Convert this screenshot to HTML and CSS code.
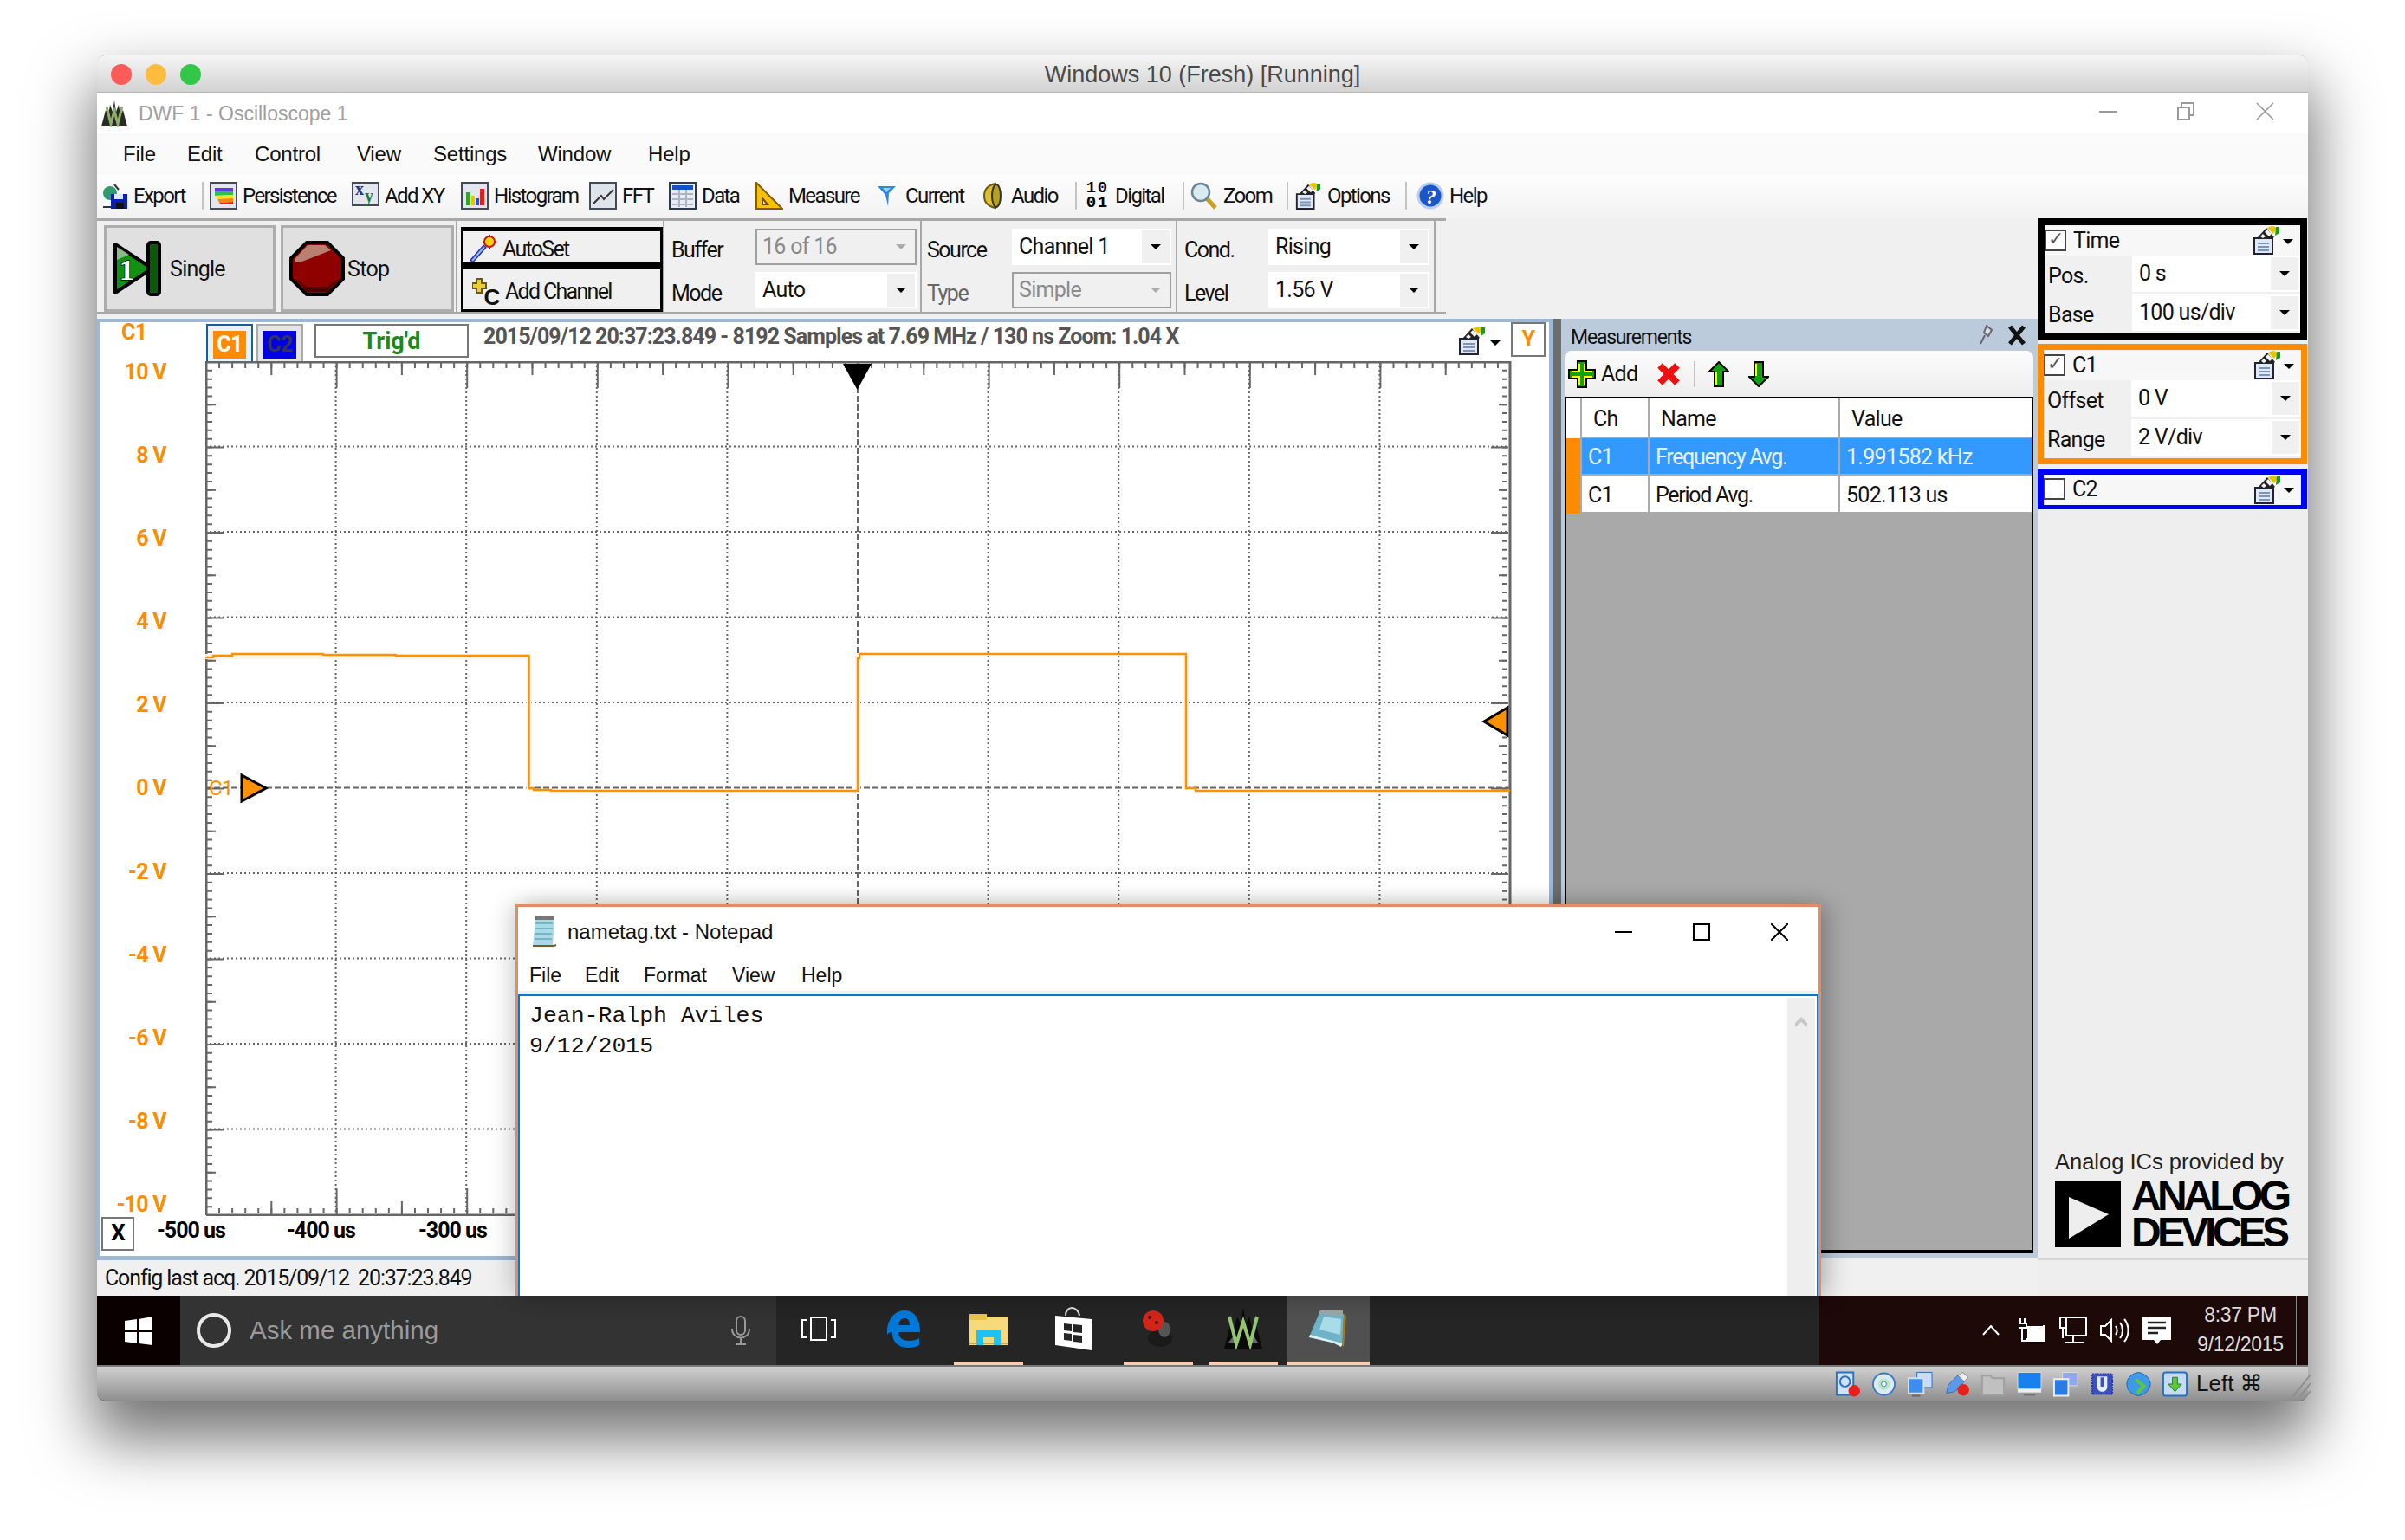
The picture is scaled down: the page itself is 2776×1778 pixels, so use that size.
FILE: index.html
```html
<!DOCTYPE html>
<html>
<head>
	<meta charset="utf-8">
	<title>Windows 10 (Fresh) [Running]</title>
	<link rel="stylesheet" href="styles.css">
</head>
<body>
<svg class="defs">
	<symbol id="opt" viewBox="0 0 32 34">
		<path d="M2 15h21v18H2z" fill="#dfe8f5" stroke="#223" stroke-width="2"/>
		<path d="M6 21h13M6 25h13M6 29h13" stroke="#7f93b5" stroke-width="2"/>
		<path d="M5 15 16 3l9 11-2 1z" fill="#222"/>
		<path d="M9 13l3-3 3 3-3 2zM14 8l3-3 3 3-3 3zM19 13l-2-2 3-3 2 2z" fill="#f2f2f2"/>
		<path d="M17 3c5-3 10-2 11 1l-4 6z" fill="#e8c400"/>
		<path d="M27 2h4v7l-5 3z" fill="#1a9a1a"/>
	</symbol>
</svg>

<div class="mac">
	<div class="mac-title">
		<div class="lights"><i class="red"></i><i class="amber"></i><i class="green"></i></div>
		Windows 10 (Fresh) [Running]
	</div>

	<div class="screen">
		<div class="dwf-title">
			<svg class="dwf-logo" viewBox="0 0 32 32"><path d="M1 31 6 12l3 6 2-12 3 8 2-13 2 13 3-8 2 12 3-6 5 19z" fill="#2b2b26"/><path d="M7 8l5 20 4-15 4 15 5-20" fill="none" stroke="#8fae6d" stroke-width="3"/></svg>
			<span class="dwf-name">DWF 1 - Oscilloscope 1</span>
			<div class="win-btns">
				<i class="min"></i>
				<svg width="21" height="21" viewBox="0 0 21 21"><path d="M1 6h13v14H1zM5 5V1h14v14h-4" fill="none" stroke="#999" stroke-width="2"/></svg>
				<svg width="21" height="21" viewBox="0 0 21 21"><path d="M1 1l19 19M20 1 1 20" stroke="#999" stroke-width="1.6"/></svg>
			</div>
		</div>

		<div class="menu">
			<span>File</span><span>Edit</span><span>Control</span><span>View</span><span>Settings</span><span>Window</span><span>Help</span>
		</div>

		<div class="toolbar">
			<div class="tool"><svg viewBox="0 0 32 32"><circle cx="11" cy="13" r="8" fill="#2f9a6a"/><path d="M3 29h14M16 3l5 6" stroke="#333" stroke-width="2"/><path d="M12 14h19v17H12z" fill="#0b1fae"/><path d="M16 14h10v6H16z" fill="#dfe6f2"/><path d="M18 24h9v7h-9z" fill="#111"/></svg>Export</div>
			<i class="sep"></i>
			<div class="tool"><svg viewBox="0 0 32 32"><path d="M1 1h30v30H1z" fill="#e3e6ee" stroke="#444b57" stroke-width="2"/><path d="M6 7h21v4H6z" fill="#5a3fe0"/><path d="M6 11l21 0v4l-21 1z" fill="#2fbf4a"/><path d="M7 16l20-1v4L9 20z" fill="#f6e21c"/><path d="M9 20l18-1v4l-16 1z" fill="#f7871c"/><path d="M11 24l16-1v3H13z" fill="#e8281c"/></svg>Persistence</div>
			<div class="tool"><svg viewBox="0 0 32 32"><path d="M1 1h30v26H1z" fill="#e3e6ee" stroke="#444b57" stroke-width="2"/><text x="4" y="15" class="svg-xy xy-x">x</text><text x="15" y="23" class="svg-xy xy-y">y</text></svg>Add XY</div>
			<div class="tool"><svg viewBox="0 0 32 32"><path d="M1 1h30v30H1z" fill="#e3e6ee" stroke="#444b57" stroke-width="2"/><path d="M6 12h5v15H6z" fill="#2fa52f"/><path d="M12 16h4v11h-4z" fill="#e8c400"/><path d="M17 19h4v8h-4z" fill="#2050d0"/><path d="M22 8h5v19h-5z" fill="#e02020"/></svg>Histogram</div>
			<div class="tool"><svg viewBox="0 0 32 32"><path d="M1 1h30v30H1z" fill="#dfe3ea" stroke="#444b57" stroke-width="2"/><path d="M5 25l9-9 3 4 11-11" fill="none" stroke="#333" stroke-width="2"/></svg>FFT</div>
			<div class="tool"><svg viewBox="0 0 32 32"><path d="M1 1h30v30H1z" fill="#e8ecf4" stroke="#2d3a48" stroke-width="2"/><path d="M4 4h24v5H4z" fill="#1450c8"/><path d="M4 14h24M4 20h24M4 26h24M12 9v20M20 9v20" stroke="#a9b4c4" stroke-width="2"/></svg>Data</div>
			<div class="tool"><svg viewBox="0 0 32 32"><path d="M1 1l30 30H1z" fill="#f4c20d" stroke="#8a5a00" stroke-width="2"/><path d="M8 19l6 7H8z" fill="#f6f0dc" stroke="#7a4a00" stroke-width="2"/></svg>Measure</div>
			<div class="tool tool-gap"><svg class="narrow-icon" viewBox="0 0 21 24"><path d="M0 1h21l-8 8-1 15-3-13z" fill="#2a8ae0"/><path d="M6 3h9l-5 5z" fill="#9ad0f5"/></svg>Current</div>
			<div class="tool tool-gap"><svg class="narrow-icon" viewBox="0 0 21 30"><path d="M14 1C4 3 1 9 1 15s3 12 13 14z" fill="#dcbf2a" stroke="#6a5a10" stroke-width="2"/><ellipse cx="15" cy="15" rx="5" ry="13" fill="#b8a020" stroke="#333" stroke-width="2"/></svg>Audio</div>
			<i class="sep"></i>
			<div class="tool"><div class="bits"><b>1</b><b>0</b><b>0</b><b>1</b></div>Digital</div>
			<i class="sep"></i>
			<div class="tool"><svg viewBox="0 0 32 32"><path d="M18 18l11 12" stroke="#c8a020" stroke-width="5"/><circle cx="12" cy="12" r="10" fill="#d8eaf2" stroke="#6b8795" stroke-width="2.5"/></svg>Zoom</div>
			<i class="sep"></i>
			<div class="tool"><svg><use href="#opt"/></svg>Options</div>
			<i class="sep"></i>
			<div class="tool"><svg viewBox="0 0 32 32"><circle cx="16" cy="16" r="14" fill="#1b56c8" stroke="#b9cdf0" stroke-width="3"/><text x="16" y="25" text-anchor="middle" class="svg-help">?</text></svg>Help</div>
		</div>

		<div class="body">
			<div class="left">
				<div class="strip">
					<div class="run-btn">
						<svg width="56" height="64" viewBox="0 0 56 64"><path d="M3 4l38 25v6L3 60z" fill="#129012" stroke="#000" stroke-width="4" stroke-linejoin="round"/><path d="M5 7l14 9-14 6z" fill="#8cb88c"/><rect x="41" y="2" width="13" height="60" rx="3" fill="#0a5a0a" stroke="#000" stroke-width="4"/><text x="16" y="45" text-anchor="middle" class="svg-one">1</text></svg>
						<span>Single</span>
					</div>
					<div class="run-btn stop">
						<svg width="64" height="64" viewBox="0 0 64 64"><path d="M20 2h24l18 18v24L44 62H20L2 44V20z" fill="#8f0000" stroke="#000" stroke-width="4"/><path d="M21 5h20l7 6-36 14H6V21z" fill="#b97f70"/><path d="M6 43l15 16h22l15-16-14 10H20z" fill="#4d0000"/></svg>
						<span>Stop</span>
					</div>
					<i class="vbar"></i>
					<div class="auto-col">
						<div class="auto-btn first"><svg width="32" height="32" viewBox="0 0 32 32"><path d="M2 31 18 13" stroke="#1c2fb0" stroke-width="5"/><path d="M3 30 17 14" stroke="#9db4ef" stroke-width="2"/><circle cx="23" cy="8" r="6" fill="#f7d40a" stroke="#d01010" stroke-width="2"/><path d="M23 0v3M31 8h-3M18 8h-3M23 13v3" stroke="#d01010" stroke-width="2"/></svg>AutoSet</div>
						<div class="auto-btn"><svg width="32" height="32" viewBox="0 0 32 32"><path d="M5 1h6v5h5v6h-5v5H5v-5H0V6h5z" fill="#e8d030" stroke="#6a5a10" stroke-width="2"/><text x="22" y="31" text-anchor="middle" class="svg-c">C</text></svg>Add Channel</div>
					</div>
					<i class="vbar"></i>
					<div class="form-group g1">
						<label>Buffer</label><div class="combo off"><span>16 of 16</span><b></b></div>
						<label>Mode</label><div class="combo"><span>Auto</span><b></b></div>
					</div>
					<i class="vbar"></i>
					<div class="form-group g2">
						<label>Source</label><div class="combo"><span>Channel 1</span><b></b></div>
						<label class="faded">Type</label><div class="combo off"><span>Simple</span><b></b></div>
					</div>
					<i class="vbar"></i>
					<div class="form-group g3">
						<label>Cond.</label><div class="combo"><span>Rising</span><b></b></div>
						<label>Level</label><div class="combo"><span>1.56 V</span><b></b></div>
					</div>
					<i class="vbar"></i>
					<i class="strip-end"></i>
				</div>

				<div class="work">
					<div class="scope">
						<div class="scope-head">
							<span class="c1-tag">C1</span>
							<div class="tab on"><span class="orange-chip">C1</span></div>
							<div class="tab"><span class="blue-chip">C2</span></div>
							<div class="trig">Trig'd</div>
							<div class="acq">2015/09/12 20:37:23.849 - 8192 Samples at 7.69 MHz / 130 ns Zoom: 1.04 X</div>
							<svg class="scope-opt"><use href="#opt"/></svg>
							<i class="drop"></i>
							<div class="y-btn">Y</div>
						</div>
						<div class="scope-mid">
							<div class="y-labels">
								<span>10 V</span><span>8 V</span><span>6 V</span><span>4 V</span><span>2 V</span><span>0 V</span><span>-2 V</span><span>-4 V</span><span>-6 V</span><span>-8 V</span><span>-10 V</span>
							</div>
							<svg class="plot" width="1510" height="987" viewBox="0 0 1510 987">
								<g class="grid-dot">
									<path d="M0 98.5H1506M0 197H1506M0 295.5H1506M0 394H1506M0 591H1506M0 689.5H1506M0 788H1506M0 886.5H1506"/>
									<path d="M150.6 0V986M301.2 0V986M451.8 0V986M602.4 0V986M903.6 0V986M1054.2 0V986M1204.8 0V986M1355.4 0V986"/>
								</g>
								<path class="grid-dash" d="M0 492.5H1506M753 0V986"/>
								<path class="axis" d="M1 986V1H1506V986H1"/>
								<path class="tick minor-x" d="M0 5H1506M0 981H1506"/>
								<path class="tick half-x" d="M0 8.5H1506M0 977.5H1506"/>
								<path class="tick major-x" d="M0 16H1506M0 970H1506"/>
								<path class="tick minor-y" d="M5 0V986M1500 0V986"/>
								<path class="tick half-y" d="M7 0V986M1498 0V986"/>
								<path class="tick major-y" d="M12 0V986M1494 0V986"/>
								<path class="halo" d="M0 341H373.5V495M753 495V340M1132 338V495"/>
								<path class="trace" d="M0 342H9V340H31V338H136V339H220V340H373.5V493H379V495H399V496H753V343H755V338H1132V493H1143V496H1506"/>
								<text x="4" y="501" class="c1-mark">C1</text>
								<path class="marker" d="M42 478 70 493 42 508z"/>
								<path class="marker" d="M1503 400 1476 416 1503 432z"/>
								<path d="M736 3H769L752.5 33z" fill="#000"/>
							</svg>
						</div>
						<div class="scope-foot">
							<div class="x-btn">X</div>
							<span>-500 us</span><span>-400 us</span><span>-300 us</span>
						</div>
					</div>
					<i class="splitter"></i>
					<div class="meas">
						<div class="meas-head">
							<span>Measurements</span>
							<svg width="16" height="24" viewBox="0 0 16 24"><path d="M9 1l6 5-4 7-5-4zM7 12 2 22" fill="#ddd" stroke="#667" stroke-width="2"/></svg>
							<svg width="22" height="24" viewBox="0 0 22 24"><path d="M3 2l16 20M19 2 3 22" stroke="#111" stroke-width="5"/></svg>
						</div>
						<div class="meas-tools">
							<svg width="32" height="32" viewBox="0 0 32 32"><path d="M11 1h10v10h10v10H21v10H11V21H1V11h10z" fill="#10a010" stroke="#000" stroke-width="2"/><path d="M13 4v9H4M19 4v9h9M13 28v-9H4M19 28v-9h9" fill="none" stroke="#ff0" stroke-width="2"/></svg>
							<span class="add-word">Add</span>
							<svg class="del" width="28" height="28" viewBox="0 0 28 28"><path d="M4 4l20 20M24 4 4 24" stroke="#ee1010" stroke-width="8"/></svg>
							<i class="sep short"></i>
							<svg class="up" width="24" height="30" viewBox="0 0 24 30"><path d="M12 1 23 12h-6v17H7V12H1z" fill="#10a010" stroke="#000" stroke-width="2"/><path d="M9 13v14" stroke="#ff0" stroke-width="2"/></svg>
							<svg class="dn" width="24" height="30" viewBox="0 0 24 30"><path d="M12 29 23 18h-6V1H7v17H1z" fill="#10a010" stroke="#000" stroke-width="2"/><path d="M9 17V3" stroke="#ff0" stroke-width="2"/></svg>
						</div>
						<div class="meas-table">
							<div class="m-row m-top"><i></i><span>Ch</span><span>Name</span><span>Value</span></div>
							<div class="m-row sel"><i></i><span>C1</span><span class="m-name">Frequency Avg.</span><span>1.991582 kHz</span></div>
							<div class="m-row"><i></i><span>C1</span><span class="m-name">Period Avg.</span><span>502.113 us</span></div>
						</div>
					</div>
				</div>
				<div class="status">Config last acq. 2015/09/12&nbsp; 20:37:23.849</div>
			</div>

			<div class="side">
				<div class="chan c-time">
					<div class="chan-top"><i class="check on"></i><span>Time</span><svg class="chan-opt"><use href="#opt"/></svg><i class="drop"></i></div>
					<div class="chan-row"><label>Pos.</label><div class="combo"><span>0 s</span><b></b></div></div>
					<div class="chan-row"><label>Base</label><div class="combo"><span>100 us/div</span><b></b></div></div>
				</div>
				<div class="chan c-one">
					<div class="chan-top"><i class="check on"></i><span>C1</span><svg class="chan-opt"><use href="#opt"/></svg><i class="drop"></i></div>
					<div class="chan-row"><label>Offset</label><div class="combo"><span>0 V</span><b></b></div></div>
					<div class="chan-row"><label>Range</label><div class="combo"><span>2 V/div</span><b></b></div></div>
				</div>
				<div class="chan c-two">
					<div class="chan-top"><i class="check"></i><span>C2</span><svg class="chan-opt"><use href="#opt"/></svg><i class="drop"></i></div>
				</div>
				<div class="adi">
					<div class="adi-by">Analog ICs provided by</div>
					<div class="adi-logo">
						<svg width="76" height="76" viewBox="0 0 76 76"><path d="M0 0h76v76H0z" fill="#000"/><path d="M16 18 62 38 16 66z" fill="#eee"/></svg>
						<div class="adi-word">ANALOG<br>DEVICES</div>
					</div>
				</div>
			</div>
		</div>

		<div class="taskbar">
			<div class="start"><svg width="34" height="33" viewBox="0 0 34 33"><path d="M1 5l14-2v13H1zM17 3l16-3v16H17zM1 18h14v13L1 29zM17 18h16v15l-16-2z" fill="#fff"/></svg></div>
			<div class="search">
				<i class="cortana"></i>
				<span>Ask me anything</span>
				<svg width="24" height="34" viewBox="0 0 24 34"><rect x="7" y="1" width="10" height="21" rx="5" fill="none" stroke="#999" stroke-width="2"/><path d="M2 15c0 14 20 14 20 0M12 26v7M6 33h12" fill="none" stroke="#999" stroke-width="2"/></svg>
			</div>
			<div class="task"><svg width="40" height="28" viewBox="0 0 40 28"><path d="M11 1h18v26H11zM6 4H1v20h5M34 4h5v20h-5" fill="none" stroke="#fff" stroke-width="2"/></svg></div>
			<div class="task"><svg width="40" height="44" viewBox="0 0 40 44"><path fill-rule="evenodd" d="M1 22C3 8 12 1 21 1c11 0 18 9 18 25H14c0 7 6 10 13 10 4 0 8-1 11-3v8c-3 2-7 3-13 3C13 44 6 36 7 26c-2 0-4 0-6 3zM14 18h13c0-5-2-8-6-8-4 0-6 3-7 8z" fill="#0078d7"/></svg></div>
			<div class="task running"><svg width="44" height="38" viewBox="0 0 44 38"><path d="M0 2h16l2 3h26v33H0z" fill="#f6d978"/><path d="M0 2h20v7H0z" fill="#e8c44a"/><path d="M0 36h44" stroke="#bfa860" stroke-width="2"/><path d="M8 38V21h28v17h-8V29H16v9z" fill="#1fc0f2"/></svg></div>
			<div class="task"><svg width="42" height="50" viewBox="0 0 42 50"><path d="M12 10C12-2 26-2 28 10" fill="none" stroke="#ddd" stroke-width="2"/><path d="M0 10l42 4v36L0 44z" fill="#fff"/><path d="M10 19l9 1v8l-9-1zM21 20l10 1v9l-10-1zM10 30l9 1v8l-9-1zM21 32l10 1v8l-10-1z" fill="#252525"/></svg></div>
			<div class="task running"><svg width="44" height="42" viewBox="0 0 44 42"><ellipse cx="24" cy="32" rx="14" ry="10" fill="#1a1a1a"/><ellipse cx="29" cy="22" rx="7" ry="9" fill="#555"/><ellipse cx="16" cy="12" rx="12" ry="12" fill="#d0261a"/><circle cx="12" cy="8" r="2" fill="#4a0a05"/><circle cx="20" cy="14" r="2" fill="#4a0a05"/></svg></div>
			<div class="task running"><svg width="46" height="48" viewBox="0 0 46 48"><path d="M1 47 8 20l4 6 4-16 4 8 3-18 3 18 4-8 4 16 4-6 7 27z" fill="#0a0a0a"/><path d="M6 40l6-8 5 8zM29 40l6-8 5 8z" fill="#666"/><path d="M7 10l8 32 8-26 8 26 8-32" fill="none" stroke="#93c572" stroke-width="4"/></svg></div>
			<div class="task running active"><svg width="46" height="44" viewBox="0 0 46 44"><path d="M14 1l27 4-1 36-39-9z" fill="#6fb3c8"/><path d="M14 1h26v6L12 5z" fill="#9aa8a8"/><path d="M18 8l20 3-1 18-24-6z" fill="#a9dbe8"/><path d="M1 32l27 6 10 5 2-4-38-10z" fill="#dff0f2"/><path d="M41 5l3 2-3 36-2-2z" fill="#a07a20"/></svg></div>
			<div class="bar-fill"></div>
			<div class="tray">
				<svg class="chev" width="20" height="12" viewBox="0 0 20 12"><path d="M1 11 10 1l9 10" fill="none" stroke="#fff" stroke-width="2"/></svg>
				<svg width="32" height="30" viewBox="0 0 32 30"><path d="M8 9h22v19H8z" fill="#fff"/><path d="M8 9h20v15H8z" fill="#111"/><path d="M10 10h18v14H10z" fill="#fff"/><path d="M2 1v6M7 1v6M0 7h9v5H0zM4 12v15h4" fill="none" stroke="#fff" stroke-width="2"/></svg>
				<svg width="32" height="32" viewBox="0 0 32 32"><path d="M8 1h23v21H8zM1 1h6v12H1zM4 13v12M16 22v7M7 30h21" fill="none" stroke="#fff" stroke-width="2"/></svg>
				<svg width="34" height="28" viewBox="0 0 34 28"><path d="M1 9h5l7-7v24l-7-7H1zM18 9c2 3 2 7 0 10M23 5c4 5 4 13 0 18M28 1c6 7 6 19 0 26" fill="none" stroke="#fff" stroke-width="2"/></svg>
				<svg width="33" height="32" viewBox="0 0 33 32"><path d="M0 0h33v27H21l-4 5-4-5H0z" fill="#fff"/><path d="M6 7h21M6 13h21M6 19h12" stroke="#222" stroke-width="2.5"/></svg>
				<div class="clock"><span>8:37 PM</span><span>9/12/2015</span></div>
				<i class="peek"></i>
			</div>
		</div>

		<div class="notepad">
			<div class="np-title">
				<svg width="30" height="36" viewBox="0 0 30 36"><path d="M4 2h22l-2 32H1z" fill="#a8dbe6"/><path d="M4 8h20M4 14h20M3 20h20M3 26h20" stroke="#74b5c8" stroke-width="2"/><path d="M4 0h22v4H4z" fill="#777"/><path d="M1 34h24l3-1" stroke="#7a5a20" stroke-width="2"/></svg>
				<span>nametag.txt - Notepad</span>
				<div class="np-btns">
					<i class="np-min"></i>
					<i class="np-max"></i>
					<svg width="20" height="20" viewBox="0 0 20 20"><path d="M0 0l20 20M20 0 0 20" stroke="#000" stroke-width="2"/></svg>
				</div>
			</div>
			<div class="np-menu"><span>File</span><span>Edit</span><span>Format</span><span>View</span><span>Help</span></div>
			<div class="np-edit">
				<div class="np-text">Jean-Ralph Aviles<br>9/12/2015</div>
				<div class="np-scroll"><svg width="14" height="12" viewBox="0 0 14 12"><path d="M7 0l7 7v5L7 6l-7 6V7z" fill="#c8c8c8"/></svg></div>
			</div>
		</div>
	</div>

	<div class="vbox">
		<svg viewBox="0 0 30 30"><path d="M2 1h20v27H2z" fill="#cfe2f7" stroke="#2a6fc0" stroke-width="2"/><circle cx="12" cy="12" r="6" fill="none" stroke="#2a6fc0" stroke-width="2"/><circle cx="23" cy="23" r="7" fill="#e8201c"/></svg>
		<svg viewBox="0 0 30 30"><circle cx="15" cy="15" r="13" fill="#dfeaf8" stroke="#3a78c8" stroke-width="2"/><circle cx="15" cy="15" r="7" fill="#b9e6c4"/><circle cx="15" cy="15" r="3" fill="#fff" stroke="#3a78c8"/></svg>
		<svg viewBox="0 0 30 30"><path d="M11 1h18v18H11z" fill="#c8dcf5" stroke="#2a6fc0"/><path d="M1 8h18v18H1z" fill="#3d8fef" stroke="#ddd" stroke-width="2"/><path d="M5 29h10" stroke="#666" stroke-width="2"/></svg>
		<svg viewBox="0 0 30 30"><path d="M3 26l2-10 12-12 8 7-12 13z" fill="#5a9ae8" stroke="#2a6fc0"/><path d="M17 5l5-4 7 6-5 5z" fill="#eee" stroke="#888"/><circle cx="23" cy="22" r="7" fill="#e8201c"/></svg>
		<svg viewBox="0 0 30 30"><path d="M2 5h10l2 3h14v20H2z" fill="#c0c0c0" stroke="#a0a0a0" stroke-width="2"/></svg>
		<svg viewBox="0 0 30 30"><path d="M1 1h28v20H1z" fill="#1a80ee" stroke="#ddd"/><path d="M1 21h28v4H1z" fill="#eee"/><path d="M8 28h14" stroke="#777" stroke-width="2"/></svg>
		<svg viewBox="0 0 30 30"><path d="M11 1h18v16H11z" fill="#8fa8f0" stroke="#ddd"/><path d="M1 9h17v20H1z" fill="#2a7ae8" stroke="#eee" stroke-width="2"/></svg>
		<svg viewBox="0 0 30 30"><path d="M3 3h24v24H3z" fill="#3a50c0" stroke="#2a3aa0" stroke-width="2" stroke-dasharray="2 1"/><path d="M9 6h12v12c0 8-12 8-12 0z" fill="#e8eef8"/><path d="M13 7h4v11h-4z" fill="#3a50c0"/></svg>
		<svg viewBox="0 0 30 30"><path d="M15 1C4 3 1 10 1 15s3 12 14 14c10-2 14-9 14-14S25 3 15 1z" fill="#3d9ae8" stroke="#1a60b0"/><path d="M13 8l11 9-9 11-3-4 6-7-8-6z" fill="#5ac83a"/></svg>
		<svg viewBox="0 0 30 30"><rect x="1" y="1" width="28" height="28" rx="3" fill="#c4daf5" stroke="#2a6fc0" stroke-width="2"/><path d="M12 7h6v8h5l-8 9-8-9h5z" fill="#5ac83a" stroke="#2a7a20"/></svg>
		<span class="host-key">Left ⌘</span>
		<svg class="grip" width="22" height="30" viewBox="0 0 22 30"><path d="M1 29 21 4M9 29 21 14M16 29l5-6" stroke="#8a8a8a" stroke-width="1.6"/></svg>
	</div>
</div>
</body>
</html>
```

FILE: styles.css
```css
html {
	height:1778px;
	overflow:hidden;
	background-color:#fff;
}
body {
	margin:0;
	height:1778px;
	font-family:Roboto,"Liberation Sans",sans-serif;
	font-size:25px;
	letter-spacing:-.7px;
	color:#111;
}
i {
	display:block;
	font-style:normal;
}
.defs {
	display:block;
	width:0;
	height:0;
}

/* mac window */
.mac {
	display:flex;
	flex-direction:column;
	width:2552px;
	height:1555px;
	margin:63px 0 0 112px;
	border-radius:10px;
	box-shadow:0 38px 70px 6px rgba(0,0,0,.55);
}
.mac-title {
	position:relative;
	box-sizing:border-box;
	height:44px;
	border-radius:10px 10px 0 0;
	border-top:1px solid #cfcfcf;
	border-bottom:1px solid #b4b4b4;
	background:linear-gradient(#f5f5f5,#d2d2d2);
	font-family:"Liberation Sans",sans-serif;
	font-size:27px;
	letter-spacing:0;
	line-height:44px;
	text-align:center;
	color:#4a4a4a;
}
.lights {
	position:absolute;
	left:16px;
	top:10px;
	display:flex;
	gap:16px;
}
.lights i {
	width:24px;
	height:24px;
	border-radius:50%;
}
.red { background-color:#fc5b57; }
.amber { background-color:#fdbc40; }
.green { background-color:#33c748; }

.screen {
	position:relative;
	display:flex;
	flex-direction:column;
	height:1469px;
	background-color:#f0f0f0;
}

/* dwf title and menu */
.dwf-title {
	display:flex;
	align-items:center;
	flex:none;
	height:47px;
	background-color:#fff;
}
.dwf-logo {
	width:32px;
	height:32px;
	margin-left:4px;
}
.dwf-name {
	margin:2px 0 0 12px;
	font-family:"Liberation Sans",sans-serif;
	font-size:23px;
	letter-spacing:0;
	color:#a0a0a0;
}
.win-btns {
	display:flex;
	align-items:center;
	gap:70px;
	margin-left:auto;
	margin-right:39px;
	padding-bottom:4px;
}
.win-btns .min {
	width:20px;
	height:2px;
	background-color:#999;
}
.menu {
	display:grid;
	grid-template-columns:74px 78px 118px 88px 121px 127px 60px;
	flex:none;
	box-sizing:border-box;
	height:48px;
	padding-left:30px;
	background-color:#fafafa;
	font-family:"Liberation Sans",sans-serif;
	font-size:24px;
	letter-spacing:-.2px;
	line-height:48px;
}
.toolbar {
	display:grid;
	grid-template-columns:117px 9px 164px 126px 148px 92px 100px 141px 122px 106px 12px 112px 9px 111px 9px 128px 13px 100px;
	flex:none;
	box-sizing:border-box;
	height:50px;
	padding:0 0 2px 4px;
	background:linear-gradient(#fdfdfd,#f2f2f2);
	font-size:24px;
	letter-spacing:-1.6px;
	align-items:center;
}
.tool {
	display:flex;
	align-items:center;
	gap:6px;
}
.tool svg {
	width:32px;
	height:32px;
	flex:none;
}
.tool .narrow-icon {
	width:21px;
}
.tool-gap {
	gap:11px;
}
.sep {
	width:2px;
	height:32px;
	background-color:#c4c4c4;
}
.sep.short {
	height:30px;
}
.bits {
	display:grid;
	grid-template-columns:13px 13px;
	width:28px;
	font-family:"Liberation Mono",monospace;
	font-size:19px;
	letter-spacing:0;
	line-height:17px;
	text-align:center;
	color:#000;
}
.svg-xy {
	font-family:"Liberation Serif",serif;
	font-size:20px;
	font-weight:bold;
}
.xy-x { fill:#223a78; }
.xy-y { fill:#1a7a3a; }
.svg-help {
	font-family:"Liberation Serif",serif;
	font-size:24px;
	font-style:italic;
	font-weight:bold;
	fill:#fff;
}
.svg-one {
	font-family:"Liberation Serif",serif;
	font-size:34px;
	font-weight:bold;
	fill:#fff;
	stroke:#000;
	stroke-width:1.5;
	paint-order:stroke;
}
.svg-c {
	font-family:"Liberation Sans",sans-serif;
	font-size:26px;
	font-weight:bold;
	fill:#111;
}

/* main area */
.body {
	display:flex;
	flex:1;
	min-height:0;
}
.left {
	display:flex;
	flex-direction:column;
	width:2240px;
}
.side {
	display:flex;
	flex-direction:column;
	gap:5px;
	width:312px;
	box-sizing:border-box;
	background-color:#eee;
}

/* run strip */
.strip {
	display:flex;
	flex:none;
	box-sizing:border-box;
	width:1557px;
	height:116px;
	padding:3px 0 6px 4px;
	background:linear-gradient(#a8a8a8,#a8a8a8) 0 0/100% 3px no-repeat,linear-gradient(#a8a8a8,#a8a8a8) 0 108px/100% 2px no-repeat,#f0f0f0;
}
.run-btn {
	display:flex;
	align-items:center;
	gap:10px;
	box-sizing:border-box;
	width:198px;
	height:100px;
	margin:5px 6px 0 4px;
	padding-left:7px;
	background-color:#e0e0e0;
	border:3px solid #adadad;
}
.run-btn.stop {
	width:200px;
	margin-left:0;
	margin-right:2px;
	gap:3px;
}
.vbar {
	flex:none;
	width:2px;
	background-color:#a8a8a8;
}
.auto-col {
	display:flex;
	flex-direction:column;
	width:233px;
	margin:7px 0 2px 4px;
	letter-spacing:-1.7px;
}
.auto-btn {
	display:flex;
	align-items:center;
	gap:6px;
	box-sizing:border-box;
	height:54px;
	padding:5px 0 0 10px;
	border:3px solid #000;
}
.auto-btn.first {
	height:46px;
	border-width:5px 3px 5px 3px;
	padding:4px 0 0 7px;
}
.form-group {
	display:grid;
	grid-template-rows:42px 42px;
	row-gap:8px;
	align-items:center;
	margin-top:9px;
	padding-left:8px;
}
.form-group label {
	padding-top:6px;
	letter-spacing:-1.5px;
}
.g1 { grid-template-columns:97px 186px; width:287px; }
.g2 { grid-template-columns:98px 184px; width:287px; padding-left:6px; }
.g3 { grid-template-columns:97px 186px; width:288px; }
.g2 .faded {
	color:#666;
}
.strip-end {
	flex:1;
}
.combo {
	display:flex;
	align-items:center;
	justify-content:space-between;
	box-sizing:border-box;
	height:42px;
	padding:2px 2px 2px 8px;
	background-color:#fff;
}
.combo span {
	padding-bottom:2px;
}
.combo b {
	display:flex;
	align-items:center;
	justify-content:center;
	align-self:stretch;
	width:32px;
	background-color:#f0f0f0;
}
.combo b:after {
	content:"";
	width:0;
	height:0;
	border-left:6px solid transparent;
	border-right:6px solid transparent;
	border-top:6px solid #000;
}
.combo.off {
	padding:0 0 0 6px;
	background-color:#f0f0f0;
	border:2px solid #a0a0a0;
	color:#8a8a8a;
}
.combo.off b:after {
	border-top-color:#aaa;
}

/* scope + measurements */
.work {
	display:flex;
	flex:1;
	min-height:0;
}
.scope {
	display:flex;
	flex-direction:column;
	box-sizing:border-box;
	width:1681px;
	background-color:#fff;
	border:solid #9db7d5;
	border-width:4px 5px 5px 4px;
}
.scope-head {
	display:flex;
	align-items:flex-start;
	flex:none;
	height:45px;
}
.c1-tag {
	width:122px;
	padding:0 0 0 24px;
	box-sizing:border-box;
	font-weight:bold;
	line-height:24px;
	color:#ff8c00;
}
.tab {
	box-sizing:border-box;
	width:54px;
	height:43px;
	margin:2px 4px 0 0;
	padding:6px 0 0 6px;
	background-color:#e4e4e4;
	border:2px solid #aaa;
	border-bottom:0;
}
.tab.on {
	background-color:#e8f0f8;
	border-color:#14609c;
}
.orange-chip,.blue-chip {
	display:block;
	width:38px;
	height:32px;
	font-weight:bold;
	line-height:32px;
	text-align:center;
	color:#fff;
}
.orange-chip { background-color:#ff8c00; }
.blue-chip { background-color:#0000e8; color:#335; }
.trig {
	box-sizing:border-box;
	width:178px;
	height:39px;
	margin:2px 0 0 9px;
	border:2px solid #777;
	font-size:27px;
	font-weight:bold;
	letter-spacing:0;
	line-height:36px;
	text-align:center;
	color:#1a8a1a;
}
.acq {
	margin-left:17px;
	font-weight:bold;
	letter-spacing:-.95px;
	line-height:34px;
	color:#555;
}
.scope-opt {
	width:32px;
	height:34px;
	margin:4px 5px 0 auto;
}
.drop {
	flex:none;
	width:0;
	height:0;
	border-left:6px solid transparent;
	border-right:6px solid transparent;
	border-top:6px solid #000;
	margin-top:21px;
}
.y-btn {
	box-sizing:border-box;
	width:40px;
	height:40px;
	margin:0 4px 0 12px;
	border:2px solid #777;
	font-weight:bold;
	line-height:36px;
	text-align:center;
	color:#ff8c00;
}
.scope-mid {
	display:flex;
	flex:none;
	height:987px;
}
.y-labels {
	display:flex;
	flex-direction:column;
	justify-content:space-between;
	box-sizing:border-box;
	width:121px;
	height:987px;
	padding-right:45px;
	font-weight:bold;
	line-height:26px;
	text-align:right;
	color:#ff8c00;
}
.plot {
	display:block;
	flex:none;
}
.grid-dot path {
	fill:none;
	stroke:#666;
	stroke-width:2;
	stroke-dasharray:2 3;
}
.grid-dash {
	fill:none;
	stroke:#666;
	stroke-width:2;
	stroke-dasharray:7 3;
}
.axis {
	fill:none;
	stroke:#666;
	stroke-width:3;
}
.tick {
	fill:none;
	stroke:#666;
}
.minor-x {
	stroke-width:6;
	stroke-dasharray:2 13.06;
}
.half-x {
	stroke-width:15;
	stroke-dasharray:2 148.6;
	stroke-dashoffset:-75.3;
}
.major-x {
	stroke-width:30;
	stroke-dasharray:2 148.6;
	stroke-dashoffset:-150.6;
}
.minor-y {
	stroke-width:6;
	stroke-dasharray:2 7.85;
}
.half-y {
	stroke-width:10;
	stroke-dasharray:2 96.5;
	stroke-dashoffset:-49.25;
}
.major-y {
	stroke-width:20;
	stroke-dasharray:2 96.5;
	stroke-dashoffset:-98.5;
}
.halo {
	fill:none;
	stroke:#fff3e4;
	stroke-width:6;
}
.trace {
	fill:none;
	stroke:#ff9000;
	stroke-width:2.4;
}
.c1-mark {
	font-family:Roboto,"Liberation Sans",sans-serif;
	font-size:24px;
	fill:#ff9000;
}
.marker {
	fill:#ff9000;
	stroke:#000;
	stroke-width:3;
}
.scope-foot {
	display:grid;
	grid-template-columns:64px 150px 152px 150px;
	flex:1;
	padding-left:1px;
	font-weight:bold;
	letter-spacing:-1px;
	line-height:34px;
	color:#000;
}
.x-btn {
	box-sizing:border-box;
	width:38px;
	height:39px;
	margin-top:1px;
	border:2px solid #777;
	text-align:center;
	font-size:26px;
	line-height:32px;
}
.splitter {
	flex:none;
	width:9px;
	background-color:#6e6e6e;
}
.meas {
	display:flex;
	flex-direction:column;
	flex:none;
	width:550px;
	box-sizing:border-box;
	margin-bottom:3px;
	padding:0 5px 5px 4px;
	background-color:#bccbdb;
}
.meas-head {
	display:flex;
	align-items:center;
	gap:17px;
	flex:none;
	height:37px;
	margin-left:7px;
}
.meas-head span {
	margin:6px auto 0 0;
	font-size:23px;
	letter-spacing:-1.2px;
}
.meas-head svg:last-child {
	margin-right:8px;
}
.meas-tools {
	display:flex;
	align-items:center;
	flex:none;
	height:53px;
	padding-left:4px;
	border-radius:8px 8px 0 0;
	background:linear-gradient(#fcfcfc,#ededed);
}
.add-word {
	margin:0 22px 0 6px;
}
.meas-tools .sep {
	margin:0 15px 0 15px;
}
.meas-tools .up {
	margin-right:22px;
}
.meas-table {
	flex:1;
	border:2px solid #000;
	border-bottom-width:4px;
	background-color:#a9a9a9;
}
.m-row {
	display:grid;
	grid-template-columns:16px 78px 220px 1fr;
	height:41px;
	margin-bottom:3px;
	line-height:43px;
	background-color:#fff;
}
.m-row.m-top {
	height:44px;
	margin-bottom:2px;
	line-height:47px;
}
.m-row i {
	background-color:#ff8c00;
}
.m-row.m-top i {
	background-color:#fff;
}
.m-row span {
	box-sizing:border-box;
	padding-left:7px;
	border-left:2px solid #aaa;
}
.m-row .m-name {
	letter-spacing:-1.3px;
}
.m-top span {
	padding-left:13px;
}
.m-row.sel {
	background-color:#3399ff;
	color:#e8f2ff;
}
.status {
	flex:none;
	height:41px;
	padding-left:9px;
	letter-spacing:-1.15px;
	line-height:42px;
	background-color:#f0f0f0;
}

/* channel boxes */
.chan {
	display:flex;
	flex-direction:column;
	flex:none;
	box-sizing:border-box;
	width:311px;
	padding:1px 0;
	background-color:#f0f0f0;
	border:7px solid #000;
}
.c-time { height:140px; border-width:8px; }
.c-one { height:139px; border-color:#ff8c00; }
.c-two { height:47px; border-color:#0000ff; }
.chan-top {
	display:flex;
	align-items:center;
	flex:none;
	box-sizing:border-box;
	height:34px;
	padding:0 8px 2px 0;
	background-color:#f7f7f7;
}
.c-two .chan-top {
	padding-bottom:3px;
}
.check {
	position:relative;
	flex:none;
	box-sizing:border-box;
	width:25px;
	height:25px;
	margin-right:8px;
	background-color:#fff;
	border:2px solid #444;
}
.check.on:after {
	content:"✓";
	position:absolute;
	left:2px;
	top:-4px;
	font-family:"DejaVu Sans",sans-serif;
	font-size:22px;
	color:#555;
}
.chan-top span {
	margin-right:auto;
}
.chan-opt {
	width:32px;
	height:34px;
	margin-right:3px;
}
.chan-top .drop {
	margin-top:3px;
}
.chan-row {
	display:grid;
	grid-template-columns:101px 1fr;
	flex:none;
	align-items:center;
	height:42px;
	margin-top:3px;
}
.chan-row label {
	padding:5px 0 0 4px;
}
.chan-top + .chan-row {
	margin-top:0;
}
.adi {
	margin:auto 0 41px;
	padding:0 0 8px 20px;
	border-bottom:3px solid #d8d8d8;
}
.adi-by {
	margin-bottom:4px;
	font-family:"Liberation Sans",sans-serif;
	font-size:25.5px;
	letter-spacing:0;
	line-height:30px;
	color:#222;
}
.adi-logo {
	display:flex;
	gap:12px;
	align-items:center;
}
.adi-word {
	font-family:"Liberation Sans",sans-serif;
	font-size:48px;
	font-weight:bold;
	line-height:42px;
	letter-spacing:-4.6px;
	color:#000;
}

/* taskbar */
.taskbar {
	display:flex;
	flex:none;
	height:80px;
	background-color:#252525;
}
.start {
	display:flex;
	align-items:center;
	justify-content:center;
	flex:none;
	width:96px;
	background-color:#0a0000;
}
.search {
	display:flex;
	align-items:center;
	flex:none;
	box-sizing:border-box;
	width:688px;
	padding:0 29px 0 19px;
	background-color:#333;
	font-family:"Liberation Sans",sans-serif;
	font-size:29.5px;
	letter-spacing:0;
	color:#9a9a9a;
}
.search span {
	margin-left:21px;
	margin-right:auto;
}
.cortana {
	box-sizing:border-box;
	width:40px;
	height:40px;
	border:4px solid #e8e8e8;
	border-radius:50%;
}
.task {
	display:flex;
	align-items:center;
	justify-content:center;
	flex:none;
	box-sizing:border-box;
	width:80px;
	margin:0 9px;
	padding-bottom:4px;
}
.task.running {
	box-shadow:inset 0 -4px 0 #fdcbb0;
}
.task.active {
	width:96px;
	margin:0 1px;
	background-color:#505050;
}
.bar-fill {
	flex:1;
}
.tray {
	display:flex;
	align-items:center;
	flex:none;
	box-sizing:border-box;
	width:564px;
	padding-left:188px;
	gap:15px;
	background-color:#1c0908;
	color:#ddd;
}
.tray .chev {
	margin-right:7px;
}
.clock {
	display:flex;
	flex-direction:column;
	align-items:center;
	width:108px;
	margin-left:11px;
	padding-bottom:2px;
	font-family:"Liberation Sans",sans-serif;
	font-size:23px;
	line-height:34px;
	letter-spacing:-.3px;
}
.peek {
	width:1px;
	height:80px;
	margin-left:-5px;
	background-color:#888;
}

/* vbox bar */
.vbox {
	display:flex;
	align-items:center;
	flex:1;
	box-sizing:border-box;
	padding-left:2006px;
	gap:13px;
	border-top:2px solid #777;
	border-bottom:1px solid #666;
	border-radius:0 0 10px 10px;
	background:linear-gradient(#d0d0d0,#8f8f8f);
}
.vbox svg {
	width:29px;
	height:30px;
	flex:none;
}
.host-key {
	margin-left:-3px;
	font-family:"Liberation Sans","DejaVu Sans",sans-serif;
	font-size:26px;
	letter-spacing:0;
	white-space:nowrap;
	color:#111;
}
.vbox .grip {
	width:22px;
	margin-left:21px;
}

/* notepad lies over the scope */
.notepad {
	position:absolute;
	left:483px;
	top:937px;
	display:flex;
	flex-direction:column;
	box-sizing:border-box;
	width:1507px;
	height:452px;
	background-color:#fff;
	border:solid #e48b63;
	border-width:3px 3px 0 3px;
	box-shadow:10px 0 24px rgba(0,0,0,.22),-10px 0 24px rgba(0,0,0,.12);
	font-family:"Liberation Sans",sans-serif;
	font-size:24px;
	letter-spacing:0;
}
.np-title {
	display:flex;
	align-items:center;
	flex:none;
	height:58px;
	padding-left:16px;
}
.np-title span {
	margin-left:11px;
}
.np-btns {
	display:flex;
	align-items:center;
	gap:70px;
	margin-left:auto;
	margin-right:35px;
}
.np-min {
	width:20px;
	height:2px;
	background-color:#000;
}
.np-max {
	box-sizing:border-box;
	width:20px;
	height:20px;
	border:2px solid #000;
}
.np-menu {
	display:grid;
	grid-template-columns:64px 68px 102px 80px 60px;
	flex:none;
	box-sizing:border-box;
	height:43px;
	padding:0 0 0 13px;
	background:linear-gradient(#fff 39px,#f0f0f0 39px);
	font-size:23px;
	line-height:42px;
}
.np-edit {
	display:flex;
	flex:1;
	min-height:0;
	border:solid #0078d7;
	border-width:2px 2px 0 2px;
}
.np-text {
	flex:1;
	padding:6px 0 0 11px;
	font-family:"Liberation Mono",monospace;
	font-size:26.5px;
	line-height:35px;
	color:#111;
}
.np-scroll {
	flex:none;
	width:32px;
	margin:2px 2px 0 0;
	padding-top:12px;
	background-color:#eee;
	text-align:center;
}
```
